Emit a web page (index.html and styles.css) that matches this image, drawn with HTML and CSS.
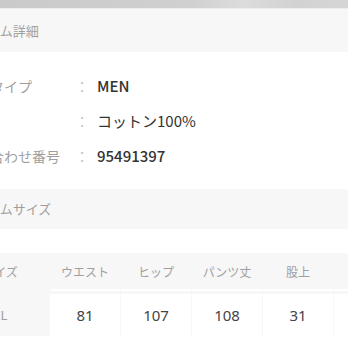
FILE: index.html
```html
<!DOCTYPE html>
<html>
<head>
  <meta charset="utf-8">
  <title>アイテム詳細</title>
  <link rel="stylesheet" href="styles.css">
</head>
<body>
  <div class="photo"></div>
  <div class="page">
    <div class="section-title first">アイテム詳細</div>
    <div class="spec">
      <div class="spec-row">
        <span class="spec-label">商品タイプ</span>
        <span class="spec-colon">：</span>
        <span class="spec-value strong">MEN</span>
      </div>
      <div class="spec-row">
        <span class="spec-label">素材</span>
        <span class="spec-colon">：</span>
        <span class="spec-value">コットン100%</span>
      </div>
      <div class="spec-row">
        <span class="spec-label">問い合わせ番号</span>
        <span class="spec-colon">：</span>
        <span class="spec-value strong">95491397</span>
      </div>
    </div>
    <div class="section-title">アイテムサイズ</div>
    <table class="size-table">
      <thead>
        <tr>
          <th class="size-col">サイズ</th>
          <th>ウエスト</th>
          <th>ヒップ</th>
          <th>パンツ丈</th>
          <th>股上</th>
          <th>わたり</th>
        </tr>
      </thead>
      <tbody>
        <tr>
          <td class="size-col">XL</td>
          <td>81</td>
          <td>107</td>
          <td>108</td>
          <td>31</td>
          <td>34</td>
        </tr>
      </tbody>
    </table>
  </div>
</body>
</html>
```

FILE: styles.css
```css
:root {
    --band: #f7f7f7;
    --label: #9f9f9f;
    --text: #333333;
}

body {
    margin: 0;
    width: 348px;
    height: 348px;
    overflow: hidden;
    background: #fff;
    font-family: "Noto Sans CJK JP", "Noto Sans", sans-serif;
    color: var(--text);
}

/* 上部の写真の端 */
.photo {
    height: 9px;
    background: linear-gradient(90deg, #cacaca 0%, #d0d0d0 55%, #dcdcdc 70%, #d2d2d2 85%, #d6d6d6 100%);
    border-bottom: 1px solid #ededed;
    box-sizing: border-box;
}

.page {
    margin-left: -38px;
    width: 460px;
}

/* セクション見出し */
.section-title {
    height: 40px;
    line-height: 40px;
    background: var(--band);
    font-size: 13px;
    color: var(--label);
}

.section-title.first {
    height: 43px;
    line-height: 43px;
}

/* 商品情報 */
.spec {
    padding: 16px 0;
}

.spec-row {
    display: grid;
    grid-template-columns: 105px 14px 1fr;
    column-gap: 8px;
    align-items: center;
    height: 35px;
}

.spec-label {
    font-size: 14px;
    color: var(--label);
    white-space: nowrap;
}

.spec-colon {
    font-size: 14px;
    color: #c4c4c4;
    text-align: center;
}

.spec-value {
    font-size: 15px;
    color: var(--text);
}

.spec-value.strong {
    font-weight: 500;
}

/* サイズ表 */
.size-table {
    margin: 24px 0 0 -12px;
    border-collapse: separate;
    border-spacing: 1px 0;
    table-layout: fixed;
    background: var(--band);
}

.size-table th {
    width: 70px;
    height: 36px;
    padding: 0;
    font-size: 12px;
    font-weight: 400;
    color: var(--label);
    text-align: center;
    border-bottom: 2px solid #fff;
}

.size-table td {
    height: 42px;
    padding: 0;
    font-family: "Noto Sans", sans-serif;
    font-size: 15px;
    color: #444;
    text-align: center;
    background: #fff;
    border-top: 3px solid var(--band);
}

.size-table .size-col {
    width: 98px;
    background: var(--band);
    border-bottom-color: var(--band);
}

.size-table td.size-col {
    font-size: 13px;
    color: var(--label);
}
```
